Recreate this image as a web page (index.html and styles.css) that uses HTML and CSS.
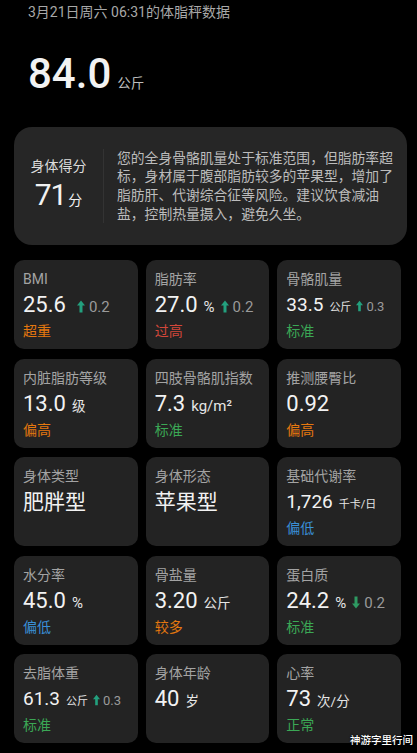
FILE: index.html
```html
<!DOCTYPE html>
<html lang="zh-CN">
<head>
    <meta charset="UTF-8">
    <meta name="viewport" content="width=device-width, initial-scale=1.0">
    <title>体脂秤数据</title>
    <link rel="stylesheet" href="styles.css">
</head>
<body>
    <div class="page">
        <div class="title">3月21日周六 06:31的体脂秤数据</div>
        <div class="weight">
            <span class="weight-num">84.0</span>
            <span class="weight-unit">公斤</span>
        </div>

        <div class="score-card">
            <div class="score">
                <div class="score-label">身体得分</div>
                <div class="score-value">71<span>分</span></div>
            </div>
            <p class="score-text">您的全身骨骼肌量处于标准范围，但脂肪率超标，身材属于腹部脂肪较多的苹果型，增加了脂肪肝、代谢综合征等风险。建议饮食减油盐，控制热量摄入，避免久坐。</p>
        </div>

        <div class="grid">
            <div class="item">
                <div class="item-label">BMI</div>
                <div class="item-value">
                    <span class="num">25.6</span>
                    <span class="delta wide"><svg class="arrow" viewBox="0 0 8 12"><path d="M4 0L8 5H5.5V12H2.5V5H0Z"/></svg>0.2</span>
                </div>
                <div class="item-status orange">超重</div>
            </div>
            <div class="item">
                <div class="item-label">脂肪率</div>
                <div class="item-value">
                    <span class="num">27.0</span>
                    <span class="unit latin">%</span>
                    <span class="delta"><svg class="arrow" viewBox="0 0 8 12"><path d="M4 0L8 5H5.5V12H2.5V5H0Z"/></svg>0.2</span>
                </div>
                <div class="item-status red">过高</div>
            </div>
            <div class="item">
                <div class="item-label">骨骼肌量</div>
                <div class="item-value small">
                    <span class="num">33.5</span>
                    <span class="unit">公斤</span>
                    <span class="delta"><svg class="arrow" viewBox="0 0 8 12"><path d="M4 0L8 5H5.5V12H2.5V5H0Z"/></svg>0.3</span>
                </div>
                <div class="item-status green">标准</div>
            </div>

            <div class="item">
                <div class="item-label">内脏脂肪等级</div>
                <div class="item-value">
                    <span class="num">13.0</span>
                    <span class="unit">级</span>
                </div>
                <div class="item-status orange">偏高</div>
            </div>
            <div class="item">
                <div class="item-label">四肢骨骼肌指数</div>
                <div class="item-value">
                    <span class="num">7.3</span>
                    <span class="unit latin">kg/m²</span>
                </div>
                <div class="item-status green">标准</div>
            </div>
            <div class="item">
                <div class="item-label">推测腰臀比</div>
                <div class="item-value">
                    <span class="num">0.92</span>
                </div>
                <div class="item-status orange">偏高</div>
            </div>

            <div class="item">
                <div class="item-label">身体类型</div>
                <div class="item-value">
                    <span class="num text">肥胖型</span>
                </div>
            </div>
            <div class="item">
                <div class="item-label">身体形态</div>
                <div class="item-value">
                    <span class="num text">苹果型</span>
                </div>
            </div>
            <div class="item">
                <div class="item-label">基础代谢率</div>
                <div class="item-value small">
                    <span class="num">1,726</span>
                    <span class="unit">千卡/日</span>
                </div>
                <div class="item-status blue">偏低</div>
            </div>

            <div class="item">
                <div class="item-label">水分率</div>
                <div class="item-value">
                    <span class="num">45.0</span>
                    <span class="unit latin">%</span>
                </div>
                <div class="item-status blue">偏低</div>
            </div>
            <div class="item">
                <div class="item-label">骨盐量</div>
                <div class="item-value">
                    <span class="num">3.20</span>
                    <span class="unit">公斤</span>
                </div>
                <div class="item-status orange">较多</div>
            </div>
            <div class="item">
                <div class="item-label">蛋白质</div>
                <div class="item-value">
                    <span class="num">24.2</span>
                    <span class="unit latin">%</span>
                    <span class="delta down"><svg class="arrow" viewBox="0 0 8 12"><path d="M4 12L8 7H5.5V0H2.5V7H0Z"/></svg>0.2</span>
                </div>
                <div class="item-status green">标准</div>
            </div>

            <div class="item">
                <div class="item-label">去脂体重</div>
                <div class="item-value small">
                    <span class="num">61.3</span>
                    <span class="unit">公斤</span>
                    <span class="delta"><svg class="arrow" viewBox="0 0 8 12"><path d="M4 0L8 5H5.5V12H2.5V5H0Z"/></svg>0.3</span>
                </div>
                <div class="item-status green">标准</div>
            </div>
            <div class="item">
                <div class="item-label">身体年龄</div>
                <div class="item-value">
                    <span class="num">40</span>
                    <span class="unit">岁</span>
                </div>
            </div>
            <div class="item">
                <div class="item-label">心率</div>
                <div class="item-value">
                    <span class="num">73</span>
                    <span class="unit">次/分</span>
                </div>
                <div class="item-status green">正常</div>
            </div>
        </div>

        <div class="watermark">神游字里行间</div>
    </div>
</body>
</html>
```

FILE: styles.css
```css
body {
    background-color: #000;
    color: #f0f0f0;
    font-family: Roboto, "Noto Sans CJK SC", sans-serif;
    margin: 0;
    padding: 0;
}
.page {
    position: relative;
    height: 753px;
    overflow: hidden;
}
.title {
    padding: 3px 0 0 28px;
    font-size: 14px;
    line-height: 18px;
    color: #a8a8a8;
}
.weight {
    display: flex;
    align-items: baseline;
    margin: 32px 0 0 28px;
    height: 42px;
}
.weight-num {
    font-size: 42px;
    line-height: 42px;
    font-weight: 500;
    color: #f2f2f2;
}
.weight-unit {
    margin-left: 6px;
    font-size: 13.5px;
    color: #bdbdbd;
}
.score-card {
    display: flex;
    align-items: center;
    height: 118px;
    margin: 32px 10px 0 14px;
    border-radius: 18px;
    background-color: #262626;
}
.score {
    width: 89px;
    flex-shrink: 0;
    text-align: center;
}
.score-label {
    font-size: 14px;
    line-height: 20px;
    color: #dcdcdc;
}
.score-value {
    margin-top: 2px;
    font-size: 30px;
    line-height: 34px;
    letter-spacing: -1px;
    color: #f2f2f2;
}
.score-value span {
    margin-left: 2px;
    font-size: 14px;
    letter-spacing: 0;
}
.score-text {
    margin: 0;
    padding-left: 13px;
    width: 280px;
    border-left: 1px solid #333;
    font-size: 13.8px;
    line-height: 18.7px;
    color: #bcbcbc;
}
.grid {
    display: grid;
    grid-template-columns: repeat(3, 1fr);
    grid-auto-rows: 89px;
    column-gap: 8px;
    row-gap: 9.5px;
    margin: 15px 16px 0 14px;
}
.item {
    padding: 9px 0 0 9px;
    border-radius: 10px;
    background-color: #232323;
}
.item-label {
    font-size: 14px;
    line-height: 20px;
    color: #a3a3a3;
}
.item-value {
    display: flex;
    align-items: baseline;
    margin-top: 2px;
    height: 28px;
    white-space: nowrap;
}
.num {
    font-size: 22px;
    line-height: 28px;
    color: #f2f2f2;
}
.num.text {
    font-size: 21px;
}
.unit {
    margin-left: 6px;
    font-size: 13.5px;
    color: #e6e6e6;
}
.unit.latin {
    font-size: 15px;
}
.delta {
    margin-left: 6px;
    font-size: 15px;
    color: #9a9a9a;
}
.delta.wide {
    margin-left: 11px;
}
.arrow {
    width: 8px;
    height: 13px;
    margin-right: 4px;
    vertical-align: -1px;
    fill: #23a07e;
}
.delta.down .arrow {
    fill: #2e9a62;
}
.item-value.small .num {
    font-size: 19px;
}
.item-value.small .unit {
    font-size: 11px;
}
.item-value.small .delta {
    margin-left: 5px;
    font-size: 13px;
}
.item-value.small .arrow {
    width: 7px;
    height: 12px;
    margin-right: 3px;
}
.item-status {
    margin-top: 2px;
    font-size: 14px;
    line-height: 20px;
}
.orange {
    color: #e5780f;
}
.red {
    color: #d2473a;
}
.green {
    color: #3ba755;
}
.blue {
    color: #3a90d8;
}
.watermark {
    position: absolute;
    right: 4px;
    bottom: 5px;
    font-size: 10.5px;
    line-height: 14px;
    font-weight: 500;
    color: #fff;
    text-shadow: 0 0 2px #000;
}
```
